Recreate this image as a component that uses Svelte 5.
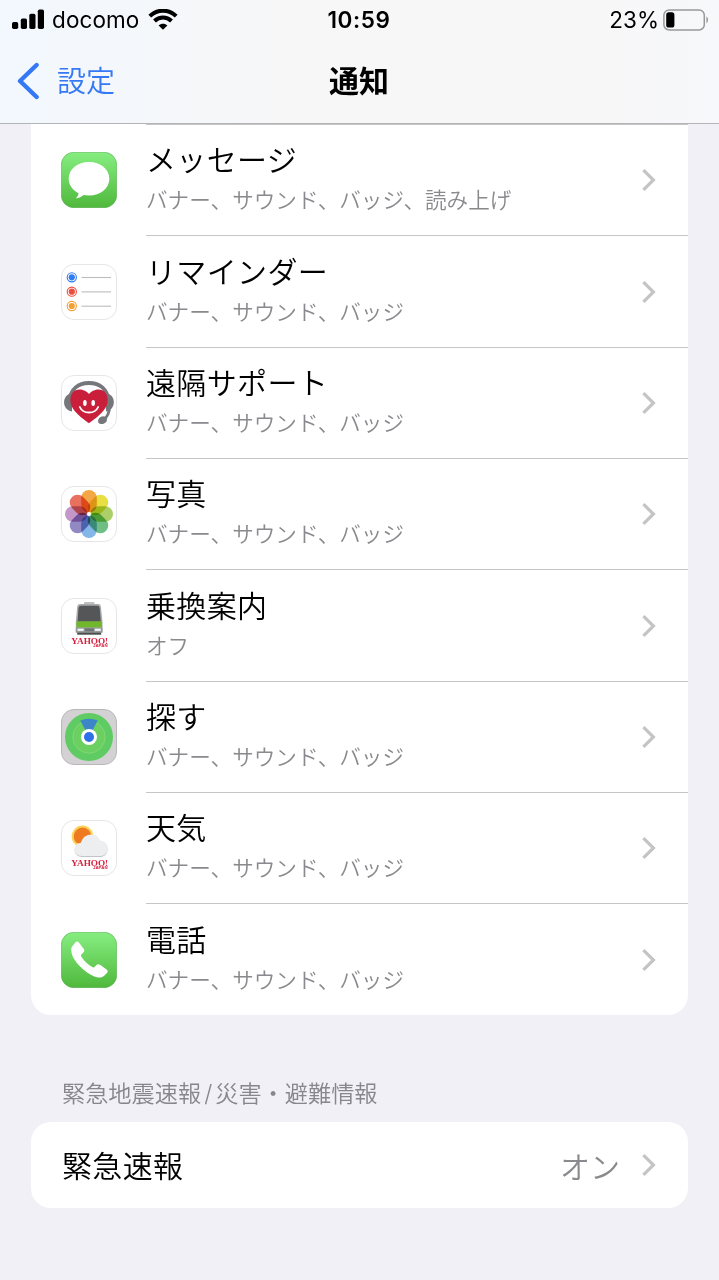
<script>
  const apps = [
    { icon: "messages", name: "メッセージ", detail: "バナー、サウンド、バッジ、読み上げ" },
    { icon: "reminders", name: "リマインダー", detail: "バナー、サウンド、バッジ" },
    { icon: "support", name: "遠隔サポート", detail: "バナー、サウンド、バッジ" },
    { icon: "photos", name: "写真", detail: "バナー、サウンド、バッジ" },
    { icon: "transit", name: "乗換案内", detail: "オフ" },
    { icon: "find", name: "探す", detail: "バナー、サウンド、バッジ" },
    { icon: "weather", name: "天気", detail: "バナー、サウンド、バッジ" },
    { icon: "phone", name: "電話", detail: "バナー、サウンド、バッジ" },
  ];

  const petals = ["#f3a746", "#e8e043", "#acd067", "#6fbf85", "#84b7e8", "#9089c2", "#c397c8", "#e8705f"];

  const reminderDots = [
    { y: 13.3, color: "#2f7bf0" },
    { y: 27.7, color: "#ec4d3d" },
    { y: 42, color: "#f2a136" },
  ];
</script>

{#snippet chevron()}
  <svg class="chevron" width="16" height="24" viewBox="0 0 16 24">
    <path d="M1.4 2.2 L11.4 12 L1.4 21.8" />
  </svg>
{/snippet}

{#snippet yahoo()}
  <text class="yahoo">
    <tspan x="10.2" y="45.6" font-size="8.8" textLength="37" lengthAdjust="spacingAndGlyphs">YAHOO!</tspan><tspan class="japan" x="32" y="49.3" font-size="4.4">JAPAN</tspan>
  </text>
{/snippet}

{#snippet appIcon(kind)}
  <svg class="app-icon" width="56" height="56" viewBox="0 0 56 56">
    <defs>
      <linearGradient id="green-{kind}" x1="0" y1="0" x2="0" y2="1">
        <stop offset="0" stop-color="#86ee80" />
        <stop offset="1" stop-color="#4fb83c" />
      </linearGradient>
    </defs>
    {#if kind === "messages" || kind === "phone"}
      <rect x="0.3" y="0.3" width="55.4" height="55.4" rx="12.5" fill="url(#green-{kind})" stroke="#58ad50" stroke-width="0.6" />
    {:else if kind === "find"}
      <rect x="0.5" y="0.5" width="55" height="55" rx="12.5" fill="#d3d1d3" stroke="#b9b8b9" />
    {:else}
      <rect x="0.5" y="0.5" width="55" height="55" rx="12.5" fill="#fff" stroke="#e6e6e8" />
    {/if}

    {#if kind === "messages"}
      <path
        fill="#fff"
        d="M28 10 C39.5 10 48.3 17.3 48.3 26.7 C48.3 36.2 39.5 43.5 28 43.5 C26 43.5 24.2 43.3 22.5 43 C20.5 44.8 18 46.2 14.8 46.2 C16.6 44.6 17.5 42.6 17.5 41.2 C11.7 38.2 7.7 33 7.7 26.7 C7.7 17.3 16.5 10 28 10 Z"
      />
    {:else if kind === "reminders"}
      {#each reminderDots as dot}
        <circle cx="10.8" cy={dot.y} r="4.6" fill="none" stroke={dot.color} stroke-width="1.1" />
        <circle cx="10.8" cy={dot.y} r="3.1" fill={dot.color} />
        <path d="M20.5 {dot.y + 0.2} H50" stroke="#bcbcc0" stroke-width="1.1" />
      {/each}
    {:else if kind === "support"}
      <path d="M8.5 25 C10 14 17 8 28 8 C39 8 46 14 47.5 25" fill="none" stroke="#75777a" stroke-width="3.8" />
      <path d="M11 18 C0.5 19.5 0.5 35 11 36.5 Z M45 18 C55.5 19.5 55.5 35 45 36.5 Z" fill="#75777a" />
      <path d="M48.5 32 C48.5 39 46 42 42.5 45" fill="none" stroke="#75777a" stroke-width="2.8" />
      <ellipse cx="41.5" cy="45.2" rx="4.6" ry="3.7" transform="rotate(-25 41.5 45.2)" fill="#75777a" />
      <path
        fill="#c91f3b"
        d="M28 48.3 C25.5 46 10.5 37 9.5 27 C8.5 19 13 14.5 18.5 14.5 C23 14.5 26.5 17 28 19 C29.5 17 33 14.5 37.5 14.5 C43 14.5 47.5 19 46.5 27 C45.5 37 30.5 46 28 48.3 Z"
      />
      <ellipse cx="23.9" cy="28" rx="1.8" ry="3" fill="#fff" />
      <ellipse cx="32.2" cy="28" rx="1.8" ry="3" fill="#fff" />
      <path d="M18.8 32 C22 39.3 34 39.3 37.2 32" fill="none" stroke="#fff" stroke-width="1.8" stroke-linecap="round" />
    {:else if kind === "photos"}
      <g class="petals">
        {#each petals as color, i}
          <rect x="20.2" y="4" width="15.6" height="22.5" rx="7.8" fill={color} transform="rotate({i * 45} 28 28)" />
        {/each}
      </g>
      <circle cx="28" cy="28" r="1.9" fill="#fff" />
    {:else if kind === "transit"}
      <rect x="23" y="4.2" width="10.5" height="1.6" rx="0.5" fill="#aaa" />
      <path d="M16.3 8 Q16.8 6.3 19 6.1 H37.2 Q39.4 6.3 39.8 8 L41.5 24 V34.5 H14.8 V24 Z" fill="#a9aaab" />
      <path d="M17.5 10 Q17.8 7.8 20 7.8 H36.2 Q38.4 7.8 38.7 10 L39.8 23.7 H16.5 Z" fill="#555657" />
      <rect x="15.5" y="23.3" width="25.3" height="6.3" fill="#71b72c" />
      <rect x="14.8" y="29.6" width="26.7" height="4.9" fill="#999b9b" />
      <rect x="16.6" y="30.7" width="6" height="2.2" fill="#eef5f5" />
      <rect x="33.8" y="30.7" width="6" height="2.2" fill="#eef5f5" />
      <rect x="23.8" y="30.4" width="9" height="3" fill="#707273" />
      <path d="M16.2 34.5 H40.2 V36.7 H16.2 Z" fill="#4b4c4c" />
      {@render yahoo()}
    {:else if kind === "find"}
      <circle cx="28" cy="28" r="24" fill="#5fcb63" />
      <circle cx="28" cy="28" r="16.2" fill="#6ccf61" stroke="#82d877" stroke-width="0.9" />
      <path d="M28 28 L19.3 11.5 Q28 7.8 36.7 11.5 Z" fill="#3478db" opacity="0.85" />
      <circle cx="28" cy="28" r="8" fill="#fff" />
      <circle cx="28" cy="28" r="5" fill="#2d70e8" />
    {:else if kind === "weather"}
      <circle cx="21.5" cy="16.4" r="10.8" fill="#fbd257" />
      <circle cx="21.5" cy="16.4" r="8.8" fill="#ef7b21" />
      <path fill="#c3c6c9" d="M21 37 C11.5 37 11.3 24 20 23.6 C22.3 13.2 36.3 12.6 38.8 21.3 C49.3 21.3 49 37 39.5 37 Z" />
      <path fill="#edeef0" d="M21 36 C11.5 36 11.3 23.2 20 22.8 C22.3 12.4 36.3 11.8 38.8 20.5 C49.3 20.5 49 36 39.5 36 Z" />
      {@render yahoo()}
    {:else if kind === "phone"}
      <path
        fill="#fff"
        d="M11.1 14.4 L14.6 10.3 C15.8 9.1 17.2 9.5 18.1 10.7 L22.8 17 C23.7 18.3 23.4 19.6 22.3 20.6 L20.5 22.3 C19.8 23 19.9 23.9 20.4 24.7 C23.5 29.3 27 32.5 31.3 35.1 C32.1 35.6 32.9 35.5 33.5 34.9 L35.2 33.2 C36.3 32.1 37.8 32 39 32.8 L45.6 37.6 C46.9 38.6 47 40 45.9 41.1 L43.2 43.8 C39.8 47 33.5 45.8 25.8 40.2 C18 34.5 11.3 26.7 10.4 20 C10.1 17.6 10.2 15.6 11.1 14.4 Z"
      />
    {/if}
  </svg>
{/snippet}

<div class="screen">
  <header>
    <div class="status-bar">
      <div class="carrier">
        <svg class="signal" width="33" height="22" viewBox="0 0 33 22">
          <rect x="0" y="13" width="6.2" height="7" rx="1.7" />
          <rect x="8.8" y="9.5" width="6.2" height="10.5" rx="1.7" />
          <rect x="17.3" y="4.8" width="6.2" height="15.2" rx="1.7" />
          <rect x="25.8" y="0.5" width="6.2" height="19.5" rx="1.7" />
        </svg>
        <span class="carrier-name">docomo</span>
        <svg class="wifi" width="30" height="22" viewBox="0 0 30 22">
          <path d="M1.8 7.2 C9.3 -0.2 20.7 -0.2 28.2 7.2" />
          <path d="M6.5 12 C11.4 7.3 18.6 7.3 23.5 12" />
          <path class="dot" d="M15 20.8 L10.6 16.5 C13.2 14.1 16.8 14.1 19.4 16.5 Z" />
        </svg>
      </div>
      <span class="time">10:59</span>
      <div class="battery">
        <span>23%</span>
        <svg width="46" height="22" viewBox="0 0 46 22">
          <rect x="0.9" y="0.9" width="40.4" height="20" rx="5.2" fill="none" stroke="#99999b" stroke-width="1.5" />
          <rect x="3.2" y="3.3" width="8.2" height="15.2" rx="2.6" fill="#000" />
          <path d="M43.4 7.6 C45.6 8.8 45.6 13 43.4 14.2 Z" fill="#99999b" />
        </svg>
      </div>
    </div>
    <nav>
      <button class="back">
        <svg width="24" height="38" viewBox="0 0 24 38">
          <path d="M21.6 3 L5 19 L21.6 35" />
        </svg>
        <span>設定</span>
      </button>
      <h1>通知</h1>
    </nav>
  </header>

  <main>
    <ul class="card apps">
      {#each apps as app}
        <li class="row">
          {@render appIcon(app.icon)}
          <div class="content">
            <div class="labels">
              <span class="name">{app.name}</span>
              <span class="detail">{app.detail}</span>
            </div>
            {@render chevron()}
          </div>
        </li>
      {/each}
    </ul>

    <h2>緊急地震速報<span class="slash">/</span>災害・避難情報</h2>

    <div class="card alert">
      <span class="name">緊急速報</span>
      <span class="value">オン</span>
      {@render chevron()}
    </div>
  </main>
</div>

<style>
  :global(body) {
    background: #f1f0f6;
  }

  .screen {
    height: 1280px;
    overflow: hidden;
    background: #f1f0f6;
    color: #000;
    font-family: Inter, "Noto Sans CJK JP", sans-serif;
  }

  header {
    box-sizing: border-box;
    height: 124px;
    background: linear-gradient(90deg, #f2f8fe, #f7f7f8 38%, #f7f7f8 85%, #f7f8fb);
    border-bottom: 1px solid #b4b4b7;
  }

  .status-bar {
    display: grid;
    grid-template-columns: 1fr auto 1fr;
    align-items: center;
    height: 39px;
    padding: 0 10px 0 12px;
    font-size: 22.5px;
  }

  .carrier,
  .battery {
    display: flex;
    align-items: center;
  }

  .carrier-name {
    margin: 0 9px 0 7px;
    letter-spacing: 0.1px;
  }

  .wifi path {
    fill: none;
    stroke: #000;
    stroke-width: 4;
  }

  .wifi .dot {
    fill: #000;
    stroke: none;
  }

  .time {
    margin-right: 3px;
    font-weight: 600;
    letter-spacing: 0.6px;
  }

  .battery {
    justify-content: flex-end;
    gap: 4px;
  }

  nav {
    display: grid;
    grid-template-columns: 1fr auto 1fr;
    align-items: center;
    height: 83px;
    padding: 0 16px 0 15px;
  }

  .back {
    display: flex;
    align-items: center;
    gap: 18px;
    padding: 0;
    border: none;
    background: none;
    color: #3478f6;
    font-family: inherit;
    font-size: 29px;
    font-weight: 350;
    line-height: 40px;
  }

  .back span {
    padding-top: 2px;
  }

  .back path {
    fill: none;
    stroke: #3478f6;
    stroke-width: 4.4;
    stroke-linecap: round;
    stroke-linejoin: round;
  }

  h1 {
    margin: 0;
    font-size: 30px;
    font-weight: 700;
    line-height: 40px;
  }

  main {
    padding: 0 31px;
  }

  .card {
    border-radius: 20px;
    background: #fff;
  }

  .apps {
    margin: 0;
    padding: 0;
    list-style: none;
    border-radius: 0 0 20px 20px;
  }

  .row {
    display: flex;
    align-items: center;
    height: 111.35px;
    padding-left: 30px;
  }

  .app-icon {
    flex: none;
    margin: 1px 29px 0 0;
  }

  .content {
    box-sizing: border-box;
    display: flex;
    flex: 1;
    align-items: center;
    justify-content: space-between;
    height: 100%;
    padding-right: 30px;
    border-top: 1px solid #c6c6c8;
  }

  .labels {
    display: flex;
    flex-direction: column;
    padding-top: 1px;
  }

  .name {
    font-size: 30px;
    font-weight: 350;
    line-height: 39px;
    letter-spacing: 0.35px;
  }

  .detail {
    color: #8a8a8e;
    font-size: 21.6px;
    font-weight: 350;
    line-height: 40px;
  }

  .chevron {
    flex: none;
  }

  .chevron path {
    fill: none;
    stroke: #c4c4c6;
    stroke-width: 3.2;
  }

  h2 {
    margin: 62px 0 0;
    padding-left: 31px;
    color: #86868b;
    font-size: 23.2px;
    font-weight: 350;
    line-height: 34px;
  }

  .slash {
    margin: 0 3px;
  }

  .alert {
    display: flex;
    align-items: center;
    height: 86px;
    margin-top: 11px;
    padding: 0 30px 0 31px;
  }

  .alert .name {
    margin-top: 3px;
  }

  .value {
    margin: 0 22px 0 auto;
    color: #8a8a8e;
    font-size: 30px;
    font-weight: 350;
  }

  .petals rect {
    mix-blend-mode: multiply;
  }

  .petals {
    isolation: isolate;
  }

  .yahoo {
    fill: #d7213f;
    font-family: "Liberation Serif", serif;
    font-weight: 700;
  }

  .japan {
    font-family: "Liberation Sans", sans-serif;
  }
</style>
